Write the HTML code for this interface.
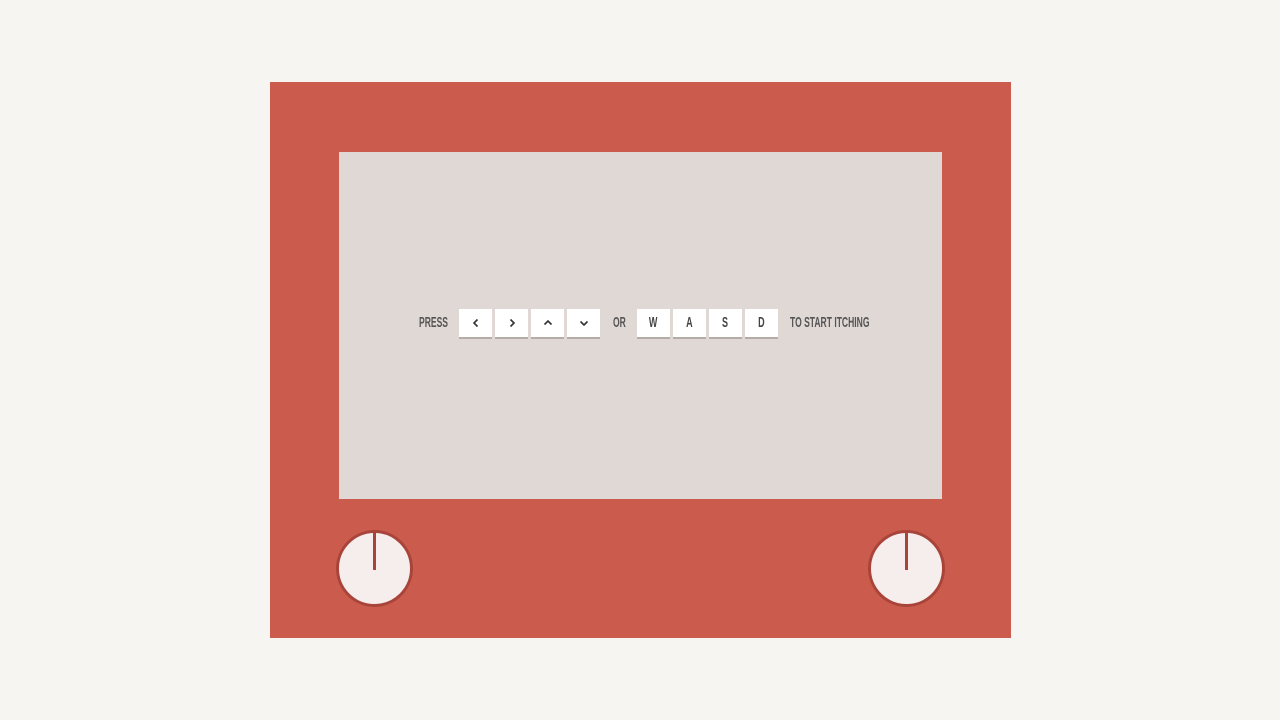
<!DOCTYPE html>
<html><head><style>
body{margin:0;width:1280px;height:720px;background:#f7f5f1;position:relative;overflow:hidden;font-family:"Liberation Sans",sans-serif}
.frame{position:absolute;left:270px;top:82px;width:741px;height:556px;background:#cb5c4d}
.screen{position:absolute;left:339px;top:152px;width:603px;height:347px;background:#e0d8d5}
.t{position:absolute;top:314px;font-size:15px;font-weight:bold;color:#555;line-height:18px;transform:scaleX(.57);transform-origin:left;white-space:nowrap}
.k{position:absolute;top:309px;width:33px;height:28px;background:#fff;border-bottom:2px solid #b5aca8;text-align:center;line-height:28px;font-size:15px;font-weight:bold;color:#444}
.k span{display:inline-block;transform:scaleX(.6)}
.k svg{margin-top:9px}
.knob{position:absolute;top:530px;width:71px;height:71px;border-radius:50%;background:#f6eeed;border:3px solid #a9443a}
.knob:after{content:"";position:absolute;left:34px;top:0;width:3px;height:37px;background:#a9443a}
</style></head><body>
<div class="frame"></div>
<div class="screen"></div>
<div class="t" style="left:419px">PRESS</div>
<div class="k" style="left:459px"><svg width="10" height="10" viewBox="0 0 10 10"><path d="M6.5 1.5L3 5l3.5 3.5" fill="none" stroke="#333" stroke-width="1.6"/></svg></div>
<div class="k" style="left:495px"><svg width="10" height="10" viewBox="0 0 10 10"><path d="M3.5 1.5L7 5l-3.5 3.5" fill="none" stroke="#333" stroke-width="1.6"/></svg></div>
<div class="k" style="left:531px"><svg width="10" height="10" viewBox="0 0 10 10"><path d="M1.5 6.5L5 3l3.5 3.5" fill="none" stroke="#333" stroke-width="1.6"/></svg></div>
<div class="k" style="left:567px"><svg width="10" height="10" viewBox="0 0 10 10"><path d="M1.5 3.5L5 7l3.5-3.5" fill="none" stroke="#333" stroke-width="1.6"/></svg></div>
<div class="t" style="left:613px">OR</div>
<div class="k" style="left:637px"><span>W</span></div>
<div class="k" style="left:673px"><span>A</span></div>
<div class="k" style="left:709px"><span>S</span></div>
<div class="k" style="left:745px"><span>D</span></div>
<div class="t" style="left:790px">TO START ITCHING</div>
<div class="knob" style="left:336px"></div>
<div class="knob" style="left:868px"></div>
</body></html>
